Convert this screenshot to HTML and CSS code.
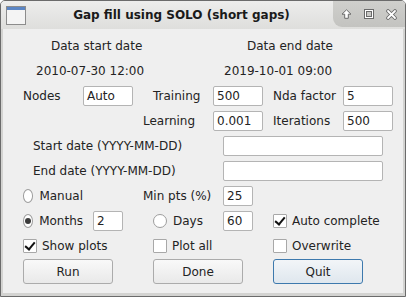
FILE: index.html
```html
<!DOCTYPE html>
<html>
  <head>
    <title>Gap fill using SOLO (short gaps)</title>
    <link rel="stylesheet" href="styles.css">
  </head>
  <body>
    <div class="window">
      <div class="titlebar">
        <svg class="app-icon" width="20" height="19" viewBox="0 0 20 19">
          <rect x="0.5" y="0.5" width="19" height="18" fill="#f4f4f4" stroke="#8c8c8c"/>
          <rect x="1" y="1" width="18" height="3" fill="#5b86c5"/>
        </svg>
        <div class="title">Gap fill using SOLO (short gaps)</div>
        <div class="controls">
          <svg width="11" height="10" viewBox="0 0 11 10">
            <path d="M5.5 0.8 L10 5.2 L7.3 5.2 L7.3 9.3 L3.7 9.3 L3.7 5.2 L1 5.2 Z" fill="#fff" stroke="#6a6a6a" stroke-width="1" stroke-linejoin="round"/>
          </svg>
          <svg width="10" height="10" viewBox="0 0 10 10">
            <rect x="0.5" y="0.5" width="9" height="9" fill="#fff" stroke="#6a6a6a" stroke-width="1"/>
            <rect x="2.5" y="2.5" width="5" height="5" fill="#c8c8c5" stroke="#6a6a6a" stroke-width="1"/>
          </svg>
          <svg width="11" height="11" viewBox="0 0 11 11">
            <path d="M2 2 L9 9 M9 2 L2 9" stroke="#6a6a6a" stroke-width="3.6" stroke-linecap="round"/>
            <path d="M2 2 L9 9 M9 2 L2 9" stroke="#fff" stroke-width="1.8" stroke-linecap="round"/>
          </svg>
        </div>
      </div>

      <div class="content">
        <div class="form">
          <div class="label span-a start-hdr">Data start date</div>
          <div class="label span-b end-hdr">Data end date</div>

          <div class="label span-a start-val">2010-07-30 12:00</div>
          <div class="label span-b end-val">2019-10-01 09:00</div>

          <div class="label c1">Nodes</div>
          <div class="field c2">Auto</div>
          <div class="label c3 indent">Training</div>
          <div class="field c4">500</div>
          <div class="label c5">Nda factor</div>
          <div class="field c6">5</div>

          <div class="label c3">Learning</div>
          <div class="field c4">0.001</div>
          <div class="label c5">Iterations</div>
          <div class="field c6">500</div>

          <div class="label span-a indent">Start date (YYYY-MM-DD)</div>
          <div class="field wide span-b"></div>

          <div class="label span-a indent">End date (YYYY-MM-DD)</div>
          <div class="field wide span-b"></div>

          <div class="option c1"><span class="radio"></span>Manual</div>
          <div class="label c3">Min pts (%)</div>
          <div class="field small c4">25</div>

          <div class="option c1"><span class="radio on"></span>Months</div>
          <div class="field small c2">2</div>
          <div class="option c3 indent"><span class="radio"></span>Days</div>
          <div class="field small c4">60</div>
          <div class="option span-c"><span class="check on"></span>Auto complete</div>

          <div class="option c1 span2"><span class="check on"></span>Show plots</div>
          <div class="option c3 indent span2"><span class="check"></span>Plot all</div>
          <div class="option span-c"><span class="check"></span>Overwrite</div>

          <button class="btn c1">Run</button>
          <button class="btn c3 push">Done</button>
          <button class="btn c5 focus">Quit</button>
        </div>
      </div>
    </div>
  </body>
</html>
```

FILE: styles.css
```css
body {
  margin: 0;
  font-family: "DejaVu Sans", sans-serif;
  font-size: 12px;
  color: #232323;
}
.window {
  width: 406px;
  height: 297px;
  box-sizing: border-box;
  background: #d3d3d1;
  border: 1px solid #6b6b6b;
  border-radius: 5px 5px 0 0;
  display: flex;
  flex-direction: column;
  overflow: hidden;
}
.titlebar {
  height: 28px;
  display: flex;
  align-items: center;
  background: linear-gradient(#ededec, #dededc);
}
.app-icon {
  margin-left: 5px;
  margin-top: 1px;
}
.title {
  flex: 1;
  text-align: center;
  font-weight: bold;
  font-size: 12px;
  color: #1a1a1a;
  padding-left: 4px;
}
.controls {
  width: 72px;
  height: 26px;
  align-self: flex-start;
  background: linear-gradient(#cfcfcc, #c3c3c0);
  border-bottom-left-radius: 9px;
  display: flex;
  align-items: center;
  gap: 12px;
  padding: 0 0 0 8px;
  box-sizing: border-box;
}
.content {
  flex: 1;
  margin: 0 2px 3px 2px;
  background: #efefef;
}
.form {
  display: grid;
  grid-template-columns: 60px 60px 70px 60px 70px 60px;
  grid-auto-rows: 25px;
  align-items: center;
  padding: 4px 0 0 20px;
}
.c1 { grid-column: 1; }
.c2 { grid-column: 2; }
.c3 { grid-column: 3; }
.c4 { grid-column: 4; }
.c5 { grid-column: 5; }
.c6 { grid-column: 6; }
.span2 { grid-column-end: span 2; }
.span-a { grid-column: 1 / 4; }
.span-b { grid-column: 4 / 7; }
.span-c { grid-column: 5 / 7; }
.label {
  white-space: nowrap;
}
.indent {
  padding-left: 10px;
}
.start-hdr { padding-left: 28px; }
.end-hdr { padding-left: 34px; }
.start-val { padding-left: 13px; }
.end-val { padding-left: 11px; }
.field {
  width: 50px;
  height: 20px;
  box-sizing: border-box;
  background: #fff;
  border: 1px solid #b4b4b4;
  border-radius: 2px;
  padding-left: 3px;
  line-height: 18px;
}
.field.wide {
  width: 160px;
  margin-left: 10px;
}
.field.small {
  width: 30px;
  margin-left: 10px;
}
.option {
  display: flex;
  align-items: center;
  white-space: nowrap;
}
.radio {
  width: 14px;
  height: 14px;
  box-sizing: border-box;
  border: 1px solid #9d9d9d;
  border-radius: 50%;
  background: #fff;
  margin-right: 6px;
  display: flex;
  align-items: center;
  justify-content: center;
}
.radio.on::after {
  content: "";
  width: 6px;
  height: 6px;
  border-radius: 50%;
  background: #3c3c3c;
}
.check {
  width: 14px;
  height: 14px;
  box-sizing: border-box;
  border: 1px solid #a8a8a8;
  border-radius: 1px;
  background: #fff;
  margin-right: 5px;
  position: relative;
}
.check.on::after {
  content: "";
  position: absolute;
  left: 3px;
  top: 0px;
  width: 4px;
  height: 8px;
  border-right: 2px solid #111;
  border-bottom: 2px solid #111;
  transform: rotate(40deg);
}
.btn {
  grid-column-end: span 2;
  align-self: start;
  margin-top: 1px;
  width: 90px;
  height: 25px;
  font-family: "DejaVu Sans", sans-serif;
  font-size: 12px;
  color: #232323;
  background: linear-gradient(#f9f9f9, #e9e9e9);
  border: 1px solid #ababab;
  border-radius: 3px;
  padding: 0;
}
.btn.push {
  margin-left: 10px;
}
.btn.focus {
  border-color: #3d79ad;
  background: linear-gradient(#f2f5f8, #dfe7ee);
}
```
